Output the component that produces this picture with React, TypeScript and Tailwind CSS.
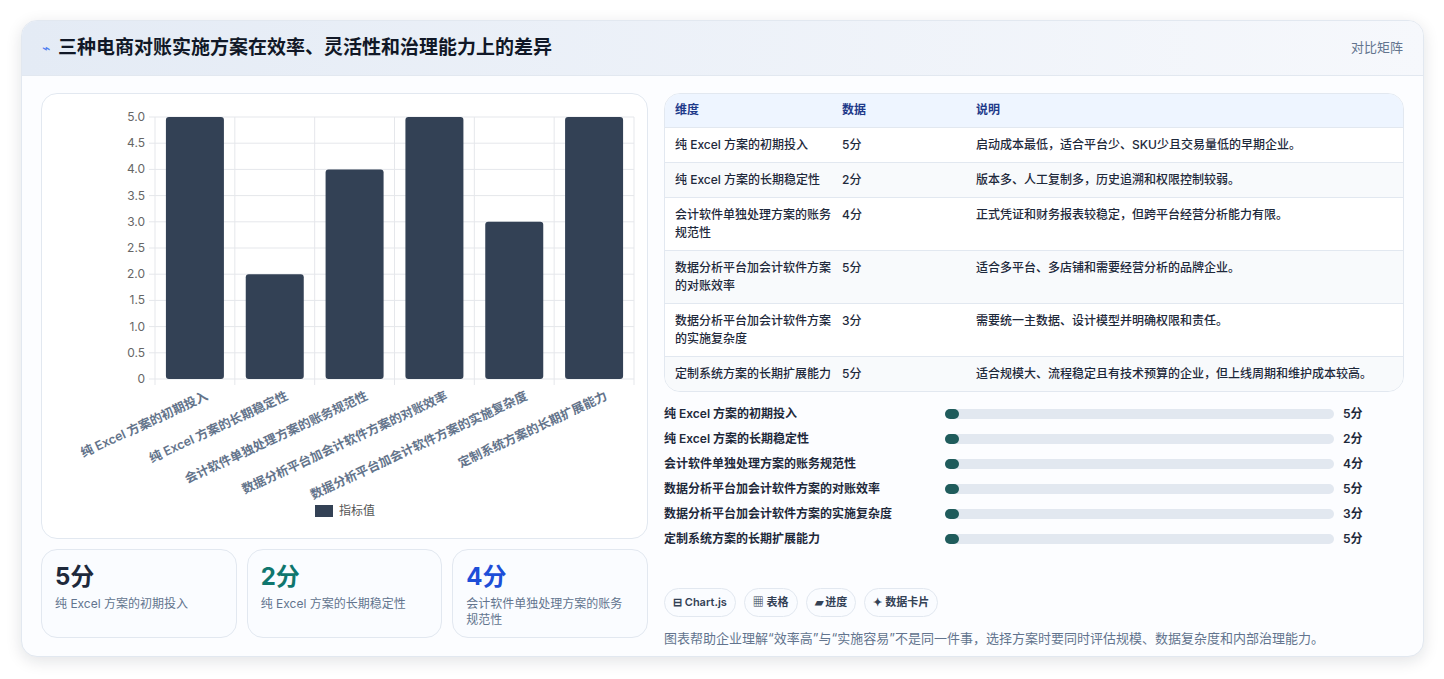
import React from "react";

const labels = ["纯 Excel 方案的初期投入","纯 Excel 方案的长期稳定性","会计软件单独处理方案的账务规范性","数据分析平台加会计软件方案的对账效率","数据分析平台加会计软件方案的实施复杂度","定制系统方案的长期扩展能力"];
const vals = [5,2,4,5,3,5];
const rows = [
  ["纯 Excel 方案的初期投入","5分","启动成本最低，适合平台少、SKU少且交易量低的早期企业。"],
  ["纯 Excel 方案的长期稳定性","2分","版本多、人工复制多，历史追溯和权限控制较弱。"],
  ["会计软件单独处理方案的账务规范性","4分","正式凭证和财务报表较稳定，但跨平台经营分析能力有限。"],
  ["数据分析平台加会计软件方案的对账效率","5分","适合多平台、多店铺和需要经营分析的品牌企业。"],
  ["数据分析平台加会计软件方案的实施复杂度","3分","需要统一主数据、设计模型并明确权限和责任。"],
  ["定制系统方案的长期扩展能力","5分","适合规模大、流程稳定且有技术预算的企业，但上线周期和维护成本较高。"],
];

function Chart() {
  const x0 = 113, x1 = 592, yTop = 23, yBot = 285;
  const h = yBot - yTop;
  const cw = (x1 - x0) / 6;
  return (
    <svg width="606" height="445" viewBox="0 0 606 445" className="block">
      {Array.from({ length: 11 }).map((_, i) => {
        const y = yBot - (h * i) / 10;
        return (
          <g key={i}>
            <line x1={x0 - 6} x2={x1} y1={y} y2={y} stroke="#e5e7eb" />
            <text x={x0 - 10} y={y + 4} textAnchor="end" fontSize="12" fill="#666">{(i * 0.5).toFixed(i === 0 ? 0 : 1)}</text>
          </g>
        );
      })}
      {Array.from({ length: 7 }).map((_, i) => (
        <line key={i} x1={x0 + cw * i} x2={x0 + cw * i} y1={yTop} y2={yBot + 6} stroke="#e5e7eb" />
      ))}
      {vals.map((v, i) => {
        const bh = (h * v) / 5;
        const cx = x0 + cw * i + cw / 2;
        return (
          <g key={i}>
            <rect x={cx - 29} y={yBot - bh} width={58} height={bh} rx={3} fill="#334155" />
            <text x={cx + 14} y={yBot + 20} textAnchor="end" fontSize="12.5" fontWeight="600" fill="#64748b" transform={`rotate(-25 ${cx + 14} ${yBot + 20})`}>{labels[i]}</text>
          </g>
        );
      })}
      <rect x={273} y={411} width={18} height={12} fill="#334155" />
      <text x={297} y={421} fontSize="12" fill="#555">指标值</text>
    </svg>
  );
}

export default function App() {
  return (
    <div className="min-h-screen bg-white p-5" style={{ fontFamily: "Inter, 'Noto Sans CJK SC', sans-serif" }}>
      <div className="w-[1403px] h-[637px] rounded-2xl border border-slate-200 bg-[#fcfdff] shadow-[0_4px_16px_rgba(15,23,42,0.12)] overflow-hidden ml-[1px] -mt-[0px]">
        <div className="h-[55px] bg-gradient-to-r from-[#e4ebf5] to-[#f6f8fc] border-b border-slate-200 flex items-center justify-between px-5">
          <div className="flex items-center gap-2">
            <span className="text-[#4f7df0] text-sm">⌁</span>
            <span className="text-[19px] font-bold text-[#111827]">三种电商对账实施方案在效率、灵活性和治理能力上的差异</span>
          </div>
          <span className="text-[13px] text-slate-500">对比矩阵</span>
        </div>
        <div className="flex gap-4 px-[19px] pt-[17px]">
          <div className="w-[607px] flex flex-col gap-[10px]">
            <div className="h-[446px] rounded-2xl border border-slate-200 bg-white overflow-hidden"><Chart /></div>
            <div className="grid grid-cols-3 gap-[10px]">
              {[["5分","text-[#1e293b]",labels[0]],["2分","text-[#0f766e]",labels[1]],["4分","text-[#1d4ed8]",labels[2]]].map(([v,c,l],i)=>(
                <div key={i} className="h-[89px] rounded-2xl border border-slate-200 bg-[#fafcff] px-[13px] pt-[12px]">
                  <div className={`text-[24px] font-bold leading-[30px] ${c}`}>{v}</div>
                  <div className="text-[12px] text-slate-500 leading-[16px] mt-[4px]">{l}</div>
                </div>
              ))}
            </div>
          </div>
          <div className="flex-1 flex flex-col">
            <div className="rounded-2xl border border-slate-200 overflow-hidden bg-white">
              <table className="w-full text-[12px] text-[#1e293b] border-collapse">
                <thead>
                  <tr className="bg-[#eef5ff] h-[33px] text-left font-semibold text-[#1e3a8a]">
                    <th className="pl-[10px] w-[177px] font-semibold">维度</th>
                    <th className="w-[134px] font-semibold">数据</th>
                    <th className="font-semibold">说明</th>
                  </tr>
                </thead>
                <tbody>
                  {rows.map((r,i)=>(
                    <tr key={i} className={`border-t border-slate-200 ${i%2===1?"bg-[#f8fafc]":""}`}>
                      <td className="pl-[10px] pr-2 py-[8px] leading-[18px] font-medium">{r[0]}</td>
                      <td className="py-[8px] align-top leading-[18px] font-medium">{r[1]}</td>
                      <td className="py-[8px] align-top leading-[18px] font-medium">{r[2]}</td>
                    </tr>
                  ))}
                </tbody>
              </table>
            </div>
            <div className="flex flex-col gap-[7px] mt-[13px]">
              {labels.map((l,i)=>(
                <div key={i} className="flex items-center h-[18px] text-[12px] font-semibold text-[#1e293b]">
                  <div className="w-[281px]">{l}</div>
                  <div className="w-[389px] h-[10px] rounded-full bg-[#e2e8f0] relative">
                    <div className="absolute left-0 top-0 h-[10px] w-[14px] rounded-full bg-[#1f5c5c]" />
                  </div>
                  <div className="ml-[9px]">{vals[i]}分</div>
                </div>
              ))}
            </div>
            <div className="flex gap-2 mt-[40px]">
              {["⊟ Chart.js","▦ 表格","▰ 进度","✦ 数据卡片"].map(t=>(
                <span key={t} className="h-[29px] px-[8px] rounded-full border border-slate-200 bg-[#fafcff] text-[11px] font-semibold text-[#334155] flex items-center">{t}</span>
              ))}
            </div>
            <div className="mt-[12px] text-[13px] text-slate-500">图表帮助企业理解“效率高”与“实施容易”不是同一件事，选择方案时要同时评估规模、数据复杂度和内部治理能力。</div>
          </div>
        </div>
      </div>
    </div>
  );
}
